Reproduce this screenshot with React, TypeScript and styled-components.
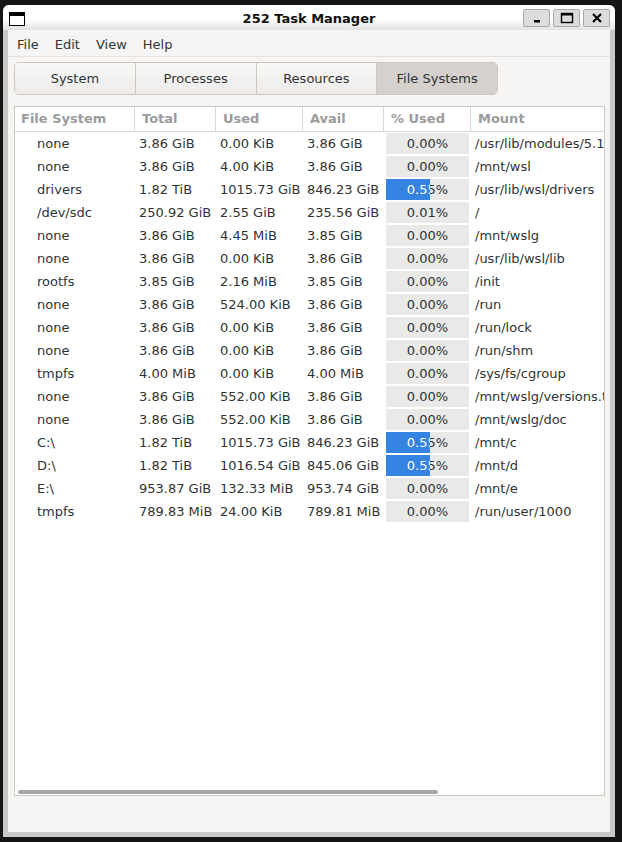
import React from "react";
import styled, { createGlobalStyle } from "styled-components";

const Global = createGlobalStyle`
  html, body { margin: 0; padding: 0; background: #151515; }
  body { font-family: "DejaVu Sans", "Liberation Sans", sans-serif; font-size: 13px; color: #2e3436; }
`;

const Screen = styled.div`
  width: 622px;
  height: 842px;
  padding: 5px 0 0 3px;
  box-sizing: border-box;
`;

const Window = styled.div`
  width: 612px;
  height: 832px;
  display: flex;
  flex-direction: column;
  background: #c9c9c9;
  border-radius: 6px 6px 0 0;
  overflow: hidden;
`;

const TitleBar = styled.div`
  height: 25px;
  flex: none;
  display: flex;
  align-items: center;
  padding: 0 5px 0 6px;
  background: linear-gradient(#ffffff 0%, #ffffff 55%, #e2e2e2 100%);
  position: relative;
`;

const Title = styled.div`
  position: absolute;
  left: 0;
  right: 0;
  top: 6px;
  text-align: center;
  font-weight: bold;
  font-size: 13px;
  line-height: 16px;
  color: #111;
  pointer-events: none;
`;

const AppIcon = styled.div`
  width: 16px;
  height: 14px;
  box-sizing: border-box;
  border: 1.5px solid #000;
  border-top-width: 4px;
  background: #fff;
  margin-top: 2px;
`;

const WinButtons = styled.div`
  margin-left: auto;
  display: flex;
  gap: 3px;
  margin-top: 1px;
`;

const WinButton = styled.div`
  width: 27px;
  height: 18px;
  box-sizing: border-box;
  background: #dcdcdc;
  border: 1px solid #a9a9a9;
  border-radius: 2px;
  display: flex;
  align-items: center;
  justify-content: center;
`;

const Body = styled.div`
  flex: 1;
  display: flex;
  flex-direction: column;
  margin: 0 5px 5px 5px;
  background: #f6f5f4;
  min-height: 0;
`;

const MenuBar = styled.div`
  height: 27px;
  flex: none;
  display: flex;
  align-items: center;
  padding: 2px 0 0 1px;
  box-sizing: border-box;
  border-bottom: 1px solid #e3e0dd;
`;

const MenuItem = styled.div`
  padding: 0 8px;
  color: #2e3436;
`;

const Tabs = styled.div`
  margin: 5px 0 0 6px;
  width: 484px;
  height: 33px;
  box-sizing: border-box;
  display: flex;
  border: 1px solid #cdc7c2;
  border-radius: 5px;
  overflow: hidden;
  flex: none;
`;

const Tab = styled.div<{ $active?: boolean }>`
  flex: 1;
  display: flex;
  align-items: center;
  justify-content: center;
  color: #2e3436;
  background: ${(p) => (p.$active ? "#d6d1cd" : "linear-gradient(#f8f8f7, #edebe9)")};
  & + & { border-left: 1px solid #cdc7c2; }
`;

const TableBox = styled.div`
  margin: 11px 5px 36px 6px;
  flex: 1;
  background: #fff;
  border: 1px solid #cdc7c2;
  overflow: hidden;
  position: relative;
  min-height: 0;
`;

const COLS = "119px 81px 87px 81px 87px 1fr";

const HeaderRow = styled.div`
  display: grid;
  grid-template-columns: ${COLS};
  height: 24px;
  border-bottom: 1px solid #dcd8d4;
`;

const HeaderCell = styled.div<{ $pad?: number }>`
  display: flex;
  align-items: center;
  padding-left: ${(p) => p.$pad ?? 7}px;
  padding-bottom: 1px;
  font-weight: bold;
  color: #9c9c9c;
  white-space: nowrap;
  & + & { border-left: 1px solid #dcd8d4; }
`;

const Row = styled.div`
  display: grid;
  grid-template-columns: ${COLS};
  height: 23px;
  align-items: center;
`;

const Cell = styled.div<{ $pad?: number }>`
  padding-left: ${(p) => p.$pad ?? 5}px;
  white-space: nowrap;
  overflow: hidden;
  color: #2e3436;
`;

const Bar = styled.div`
  position: relative;
  margin: 0 1px 0 3px;
  height: 21px;
  background: #e9e9e7;
  overflow: hidden;
`;

const BarText = styled.div<{ $light?: boolean }>`
  position: absolute;
  top: 0;
  left: 0;
  width: 83px;
  height: 21px;
  display: flex;
  align-items: center;
  justify-content: center;
  color: ${(p) => (p.$light ? "#fff" : "#2e3436")};
`;

const BarFill = styled.div`
  position: absolute;
  top: 0;
  left: 0;
  height: 21px;
  background: #3584e4;
  overflow: hidden;
`;

const Scrollbar = styled.div`
  position: absolute;
  left: 3px;
  bottom: 1px;
  width: 420px;
  height: 4px;
  border-radius: 2px;
  background: #a6a6a6;
`;

type R = [string, string, string, string, string, string, number];

const rows: R[] = [
  ["none", "3.86 GiB", "0.00 KiB", "3.86 GiB", "0.00%", "/usr/lib/modules/5.15.90.1-microsoft-standard-WSL2", 0],
  ["none", "3.86 GiB", "4.00 KiB", "3.86 GiB", "0.00%", "/mnt/wsl", 0],
  ["drivers", "1.82 TiB", "1015.73 GiB", "846.23 GiB", "0.55%", "/usr/lib/wsl/drivers", 44],
  ["/dev/sdc", "250.92 GiB", "2.55 GiB", "235.56 GiB", "0.01%", "/", 0],
  ["none", "3.86 GiB", "4.45 MiB", "3.85 GiB", "0.00%", "/mnt/wslg", 0],
  ["none", "3.86 GiB", "0.00 KiB", "3.86 GiB", "0.00%", "/usr/lib/wsl/lib", 0],
  ["rootfs", "3.85 GiB", "2.16 MiB", "3.85 GiB", "0.00%", "/init", 0],
  ["none", "3.86 GiB", "524.00 KiB", "3.86 GiB", "0.00%", "/run", 0],
  ["none", "3.86 GiB", "0.00 KiB", "3.86 GiB", "0.00%", "/run/lock", 0],
  ["none", "3.86 GiB", "0.00 KiB", "3.86 GiB", "0.00%", "/run/shm", 0],
  ["tmpfs", "4.00 MiB", "0.00 KiB", "4.00 MiB", "0.00%", "/sys/fs/cgroup", 0],
  ["none", "3.86 GiB", "552.00 KiB", "3.86 GiB", "0.00%", "/mnt/wslg/versions.txt", 0],
  ["none", "3.86 GiB", "552.00 KiB", "3.86 GiB", "0.00%", "/mnt/wslg/doc", 0],
  ["C:\\", "1.82 TiB", "1015.73 GiB", "846.23 GiB", "0.55%", "/mnt/c", 44],
  ["D:\\", "1.82 TiB", "1016.54 GiB", "845.06 GiB", "0.55%", "/mnt/d", 44],
  ["E:\\", "953.87 GiB", "132.33 MiB", "953.74 GiB", "0.00%", "/mnt/e", 0],
  ["tmpfs", "789.83 MiB", "24.00 KiB", "789.81 MiB", "0.00%", "/run/user/1000", 0],
];

const MinIcon = () => (
  <svg width="12" height="12" viewBox="0 0 12 12">
    <rect x="3" y="8" width="6" height="2.5" fill="#000" />
  </svg>
);
const MaxIcon = () => (
  <svg width="14" height="12" viewBox="0 0 14 12">
    <rect x="1.5" y="1.5" width="11" height="9" fill="none" stroke="#000" strokeWidth="1.4" />
    <rect x="1" y="1" width="12" height="2.5" fill="#000" />
  </svg>
);
const CloseIcon = () => (
  <svg width="12" height="12" viewBox="0 0 12 12">
    <path d="M2 2 L10 10 M10 2 L2 10" stroke="#000" strokeWidth="2.2" />
  </svg>
);

export default function App() {
  return (
    <Screen>
      <Global />
      <Window>
        <TitleBar>
          <AppIcon />
          <Title>252 Task Manager</Title>
          <WinButtons>
            <WinButton><MinIcon /></WinButton>
            <WinButton><MaxIcon /></WinButton>
            <WinButton><CloseIcon /></WinButton>
          </WinButtons>
        </TitleBar>
        <Body>
          <MenuBar>
            <MenuItem>File</MenuItem>
            <MenuItem>Edit</MenuItem>
            <MenuItem>View</MenuItem>
            <MenuItem>Help</MenuItem>
          </MenuBar>
          <Tabs>
            <Tab>System</Tab>
            <Tab>Processes</Tab>
            <Tab>Resources</Tab>
            <Tab $active>File Systems</Tab>
          </Tabs>
          <TableBox>
            <HeaderRow>
              <HeaderCell $pad={6}>File System</HeaderCell>
              <HeaderCell>Total</HeaderCell>
              <HeaderCell>Used</HeaderCell>
              <HeaderCell>Avail</HeaderCell>
              <HeaderCell>% Used</HeaderCell>
              <HeaderCell>Mount</HeaderCell>
            </HeaderRow>
            {rows.map((r, i) => (
              <Row key={i}>
                <Cell $pad={22}>{r[0]}</Cell>
                <Cell>{r[1]}</Cell>
                <Cell>{r[2]}</Cell>
                <Cell>{r[3]}</Cell>
                <Bar>
                  <BarText>{r[4]}</BarText>
                  {r[6] > 0 && (
                    <BarFill style={{ width: r[6] }}>
                      <BarText $light>{r[4]}</BarText>
                    </BarFill>
                  )}
                </Bar>
                <Cell>{r[5]}</Cell>
              </Row>
            ))}
            <Scrollbar />
          </TableBox>
        </Body>
      </Window>
    </Screen>
  );
}
